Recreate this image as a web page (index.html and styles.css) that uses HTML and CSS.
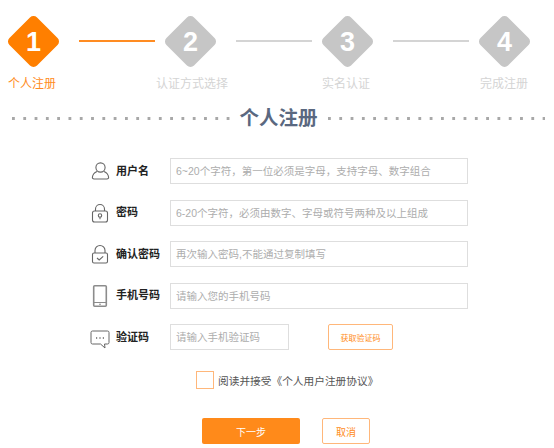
FILE: index.html
```html
<!DOCTYPE html>
<html>
<head>
  <title>个人注册</title>
  <link rel="stylesheet" href="styles.css">
</head>
<body>
  <div class="steps">
    <div class="diamond active"><span>1</span></div>
    <div class="line active"></div>
    <div class="diamond"><span>2</span></div>
    <div class="line"></div>
    <div class="diamond"><span>3</span></div>
    <div class="line"></div>
    <div class="diamond"><span>4</span></div>
  </div>
  <div class="step-labels">
    <span class="active">个人注册</span>
    <span>认证方式选择</span>
    <span>实名认证</span>
    <span>完成注册</span>
  </div>

  <div class="title-row">
    <div class="dots"></div>
    <h1>个人注册</h1>
    <div class="dots"></div>
  </div>

  <form class="form">
    <div class="row">
      <svg class="icon" viewBox="0 0 20 20" fill="none" stroke="#666" stroke-width="1.1">
        <circle cx="10.500" cy="6.500" r="4.600"/>
        <path d="M7 10.500C4.500 11.500 2.700 13.500 2.400 16.200c-.1 1 .5 1.800 1.600 1.800h13c1.100 0 1.700-.8 1.600-1.800-.3-2.700-2.100-4.700-4.600-5.700"/>
      </svg>
      <label>用户名</label>
      <input type="text" placeholder="6~20个字符，第一位必须是字母，支持字母、数字组合">
    </div>
    <div class="row">
      <svg class="icon" viewBox="0 0 20 20" fill="none" stroke="#666" stroke-width="1.1">
        <path d="M5.500 8V6a4.500 4.500 0 0 1 9 0v2"/>
        <rect x="2.500" y="8" width="15" height="11" rx="2"/>
        <circle cx="10" cy="12.500" r="1.700"/>
        <path d="M10 14.200v2"/>
      </svg>
      <label>密码</label>
      <input type="text" placeholder="6-20个字符，必须由数字、字母或符号两种及以上组成">
    </div>
    <div class="row">
      <svg class="icon" viewBox="0 0 20 20" fill="none" stroke="#666" stroke-width="1.1">
        <path d="M5 9V6.500a5 5 0 0 1 10 0V9"/>
        <rect x="2.500" y="9" width="15" height="10" rx="1.500"/>
        <path d="M7 14l2.200 2 4-3.600"/>
      </svg>
      <label>确认密码</label>
      <input type="text" placeholder="再次输入密码,不能通过复制填写">
    </div>
    <div class="row">
      <svg class="icon phone" viewBox="0 0 20 22" fill="none" stroke="#8c8c8c">
        <rect x="3.700" y=".8" width="12.600" height="20.400" rx="1" stroke-width="1.600"/>
        <path d="M3.500 17.500h13" stroke-width="1"/>
        <circle cx="10" cy="19.300" r=".7" fill="#666" stroke="none"/>
      </svg>
      <label>手机号码</label>
      <input type="text" placeholder="请输入您的手机号码">
    </div>
    <div class="row">
      <svg class="icon chat" viewBox="0 0 20 20" fill="none" stroke="#666" stroke-width="1">
        <path d="M2.500 2h15A1.500 1.500 0 0 1 19 3.500v10a1.500 1.500 0 0 1-1.500 1.500H14.500l.5 4-4.500-4H2.500A1.500 1.500 0 0 1 1 13.500v-10A1.500 1.500 0 0 1 2.500 2z"/>
        <path d="M6 9h1.200M9.400 9h1.200M12.800 9h1.200" stroke-width="1.300"/>
      </svg>
      <label>验证码</label>
      <input class="short" type="text" placeholder="请输入手机验证码">
      <button class="get-code" type="button">获取验证码</button>
    </div>

    <div class="agree">
      <span class="checkbox"></span>
      <span>阅读并接受《个人用户注册协议》</span>
    </div>

    <div class="actions">
      <button class="next" type="button">下一步</button>
      <button class="cancel" type="button">取消</button>
    </div>
  </form>
</body>
</html>
```

FILE: styles.css
```css
body {
  margin: 0;
  background-color: #fff;
  font-family: "Liberation Sans", "Noto Sans CJK SC", sans-serif;
  color: #333;
}

/* Steps */
.steps {
  display: flex;
  align-items: center;
  padding: 16px 0 0 8px;
}

.diamond {
  width: 51px;
  height: 51px;
  display: grid;
  place-items: center;
  color: #fff;
  font-size: 27px;
  font-weight: bold;
}

.diamond::before {
  content: '';
  grid-area: 1 / 1;
  width: 39px;
  height: 39px;
  border-radius: 5px;
  background-color: #c6c6c6;
  transform: rotate(45deg);
}

.diamond span {
  grid-area: 1 / 1;
  z-index: 1;
  padding-top: 2px;
}

.diamond.active::before {
  background-color: #ff7f00;
}

.line {
  width: 76px;
  height: 2px;
  margin: 0 10px 1px 20px;
  background-color: #d4d4d4;
}

.line.active {
  background-color: #ff8c22;
}

.step-labels {
  display: flex;
  margin-top: 8px;
  font-size: 12px;
  line-height: 18px;
  color: #d4d4d4;
}

.step-labels span:nth-child(1) { margin-left: 8px; }
.step-labels span:nth-child(2) { margin-left: 100px; }
.step-labels span:nth-child(3) { margin-left: 94px; }
.step-labels span:nth-child(4) { margin-left: 110px; }

.step-labels .active {
  color: #ff8c22;
}

/* Title */
.title-row {
  display: flex;
  align-items: center;
  margin-top: 12px;
  padding: 0 9px 0 12px;
}

.title-row h1 {
  margin: 0 10px;
  font-size: 19.500px;
  line-height: 26px;
  font-weight: bold;
  color: #5a6880;
}

.dots {
  flex: 1;
  height: 3px;
  background-image: linear-gradient(90deg, #a8a8a8 3px, transparent 3px);
  background-size: 11.300px 3px;
}

/* Form */
.form {
  margin-top: 27px;
  padding-left: 90px;
}

.row {
  display: flex;
  align-items: center;
  height: 26px;
  margin-bottom: 15.500px;
}

.icon {
  width: 20px;
  height: 20px;
  margin-right: 6px;
}

.icon.phone {
  height: 22px;
}

.icon.chat {
  margin-top: 4px;
}

label {
  width: 54px;
  padding-bottom: 3px;
  font-size: 11px;
  font-weight: bold;
  color: #222;
}

input {
  width: 298px;
  height: 26px;
  box-sizing: border-box;
  padding: 0 5px;
  border: 1px solid #dedede;
  font-family: inherit;
  font-size: 10.500px;
  outline: none;
}

input::placeholder {
  color: #adadad;
}

input.short {
  width: 119px;
}

.get-code {
  width: 65px;
  height: 26px;
  margin-left: 39px;
  padding: 0;
  border: 1px solid #ffb77a;
  border-radius: 2px;
  background-color: #fff;
  font-family: inherit;
  font-size: 8px;
  color: #ff8c22;
}

.agree {
  display: flex;
  align-items: center;
  margin: 21px 0 0 106px;
  font-size: 10.700px;
  color: #555;
}

.checkbox {
  width: 18px;
  height: 18px;
  box-sizing: border-box;
  margin-right: 4px;
  border: 1px solid #ffb77a;
}

.actions {
  display: flex;
  margin: 29px 0 0 112px;
}

.next {
  width: 98px;
  height: 26px;
  border: none;
  border-radius: 2px;
  background-color: #ff8a1a;
  font-family: inherit;
  font-size: 10px;
  color: #fff;
}

.cancel {
  width: 48px;
  height: 26px;
  margin-left: 22px;
  border: 1px solid #ffb77a;
  border-radius: 2px;
  background-color: #fff;
  font-family: inherit;
  font-size: 10px;
  color: #ff8c22;
}
```
